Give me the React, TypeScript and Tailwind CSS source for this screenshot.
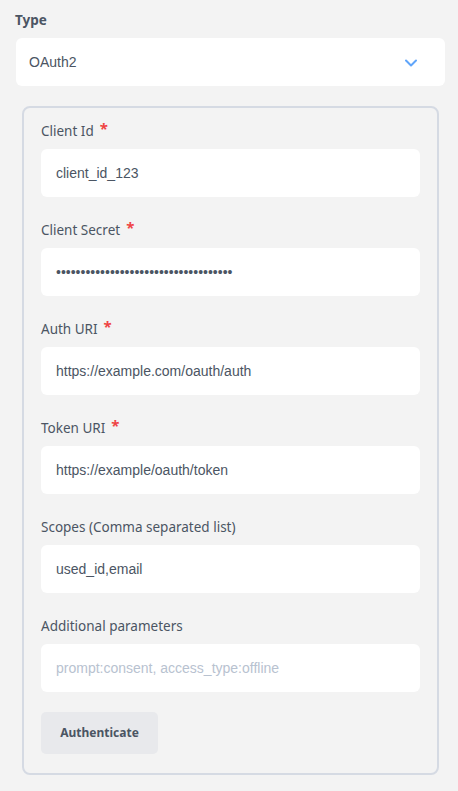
import { useState } from "react";

type Field = { label: string; value: string; required?: boolean; secret?: boolean; placeholder?: string };

const fields: Field[] = [
  { label: "Client Id", value: "client_id_123", required: true },
  { label: "Client Secret", value: "secretsecretsecretsecretsecret123456", required: true, secret: true },
  { label: "Auth URI", value: "https://example.com/oauth/auth", required: true },
  { label: "Token URI", value: "https://example/oauth/token", required: true },
  { label: "Scopes (Comma separated list)", value: "used_id,email" },
  { label: "Additional parameters", value: "", placeholder: "prompt:consent, access_type:offline" },
];

const labelFont = { fontFamily: '"Noto Sans", "Open Sans", sans-serif' };
const inputFont = { fontFamily: '"Liberation Sans", Arial, sans-serif' };

export default function App() {
  const [values, setValues] = useState(fields.map((f) => f.value));

  function update(i: number, val: string) {
    const next = [...values];
    next[i] = val;
    setValues(next);
  }

  return (
    <div className="min-h-screen bg-[#f3f3f3] pl-4 pr-[13px] pt-[10px]">
      <label style={labelFont} className="block text-[13.5px] font-bold leading-5 text-[#4b5563] -ml-px">
        Type
      </label>
      <div className="mt-2 flex h-12 items-center justify-between rounded-md bg-white pl-[13px] pr-[28px]">
        <span style={inputFont} className="mt-px text-[14px] text-[#4b5563]">OAuth2</span>
        <svg width="12" height="8" viewBox="0 0 12 8" fill="none" className="mt-px">
          <path d="M1 1.5L6 6.5L11 1.5" stroke="#60a5fa" strokeWidth="2" strokeLinecap="round" strokeLinejoin="round" />
        </svg>
      </div>

      <div className="mx-[6px] mt-5 rounded-lg border-2 border-[#d5dae3] px-[17px] pt-[13px] pb-[19px]">
        <div className="flex flex-col gap-[23px]">
          {fields.map((f, i) => (
            <div key={f.label}>
              <label style={labelFont} className="flex items-start text-[13.5px] leading-5 text-[#4b5563]">
                {f.label}
                {f.required && <span className="ml-[6px] -mt-[3px] text-[15px] font-bold text-[#ef4444]">*</span>}
              </label>
              <input
                type={f.secret ? "password" : "text"}
                value={values[i]}
                placeholder={f.placeholder}
                onChange={(e) => update(i, e.target.value)}
                style={inputFont}
                className="mt-2 block h-12 w-full rounded-md bg-white px-[15px] text-[14px] text-[#4b5563] placeholder:text-[#b8c2d0] focus:outline-none"
              />
            </div>
          ))}
        </div>
        <button
          style={labelFont}
          className="mt-5 h-[42px] w-[117px] rounded-[5px] bg-[#e8e9ec] text-[12px] font-bold text-[#4b5563]"
        >
          Authenticate
        </button>
      </div>
    </div>
  );
}
